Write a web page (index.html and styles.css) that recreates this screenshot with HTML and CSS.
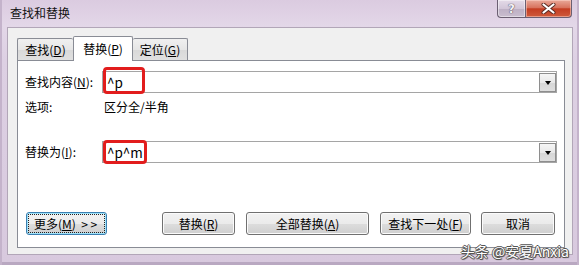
FILE: index.html
```html
<!DOCTYPE html>
<html lang="zh-CN">
<head>
<meta charset="utf-8">
<title>查找和替换</title>
<link rel="stylesheet" href="styles.css">
</head>
<body>
<div class="window">
  <div class="titlebar">
    <span class="title">查找和替换</span>
    <div class="caption-btns">
      <div class="cap help"><span>?</span></div>
      <div class="cap close">
        <svg width="15" height="11" viewBox="0 0 15 11">
          <path d="M2.5 1.5 L12.5 9.5 M12.5 1.5 L2.5 9.5" stroke="#5a2a22" stroke-width="4" stroke-linecap="round"/>
          <path d="M2.5 1.5 L12.5 9.5 M12.5 1.5 L2.5 9.5" stroke="#ffffff" stroke-width="2.2" stroke-linecap="round"/>
        </svg>
      </div>
    </div>
  </div>
  <div class="client">
    <div class="tabs">
      <div class="tab t1">查找(<u>D</u>)</div>
      <div class="tab t2 active">替换(<u>P</u>)</div>
      <div class="tab t3">定位(<u>G</u>)</div>
    </div>
    <div class="panel">
      <div class="row r1">
        <span class="lbl">查找内容(<u>N</u>):</span>
        <div class="combo">
          <span class="val">^p</span>
          <div class="drop"><i class="tri"></i></div>
          <div class="mark m1"></div>
        </div>
      </div>
      <div class="row r2">
        <span class="lbl">选项:</span>
        <span class="opt">区分全/半角</span>
      </div>
      <div class="row r3">
        <span class="lbl">替换为(<u>I</u>):</span>
        <div class="combo">
          <span class="val">^p^m</span>
          <div class="drop"><i class="tri"></i></div>
          <div class="mark m2"></div>
        </div>
      </div>
      <div class="buttons">
        <div class="btn default b1"><span class="focus">更多(<u>M</u>)&nbsp; &gt; &gt;</span></div>
        <div class="btn b2">替换(<u>R</u>)</div>
        <div class="btn b3">全部替换(<u>A</u>)</div>
        <div class="btn b4">查找下一处(<u>F</u>)</div>
        <div class="btn b5">取消</div>
      </div>
    </div>
  </div>
  <div class="watermark">头条 @安夏Anxia</div>
</div>
</body>
</html>
```
FILE: styles.css
```css
* { box-sizing: border-box; }
html, body { margin: 0; padding: 0; }
body {
  width: 579px;
  height: 265px;
  overflow: hidden;
  font-family: "Noto Sans CJK SC", "Noto Sans", sans-serif;
  font-size: 12px;
  color: #000;
  background: #d9cbdf;
}
u { text-decoration: underline; text-underline-offset: 1px; }

.window {
  position: relative;
  width: 579px;
  height: 265px;
  display: flex;
  flex-direction: column;
  padding: 0 6px 10px 7px;
  background: linear-gradient(to bottom, #dbcbe0 0px, #e3d7e8 26px, #ddd0e3 60px, #d8c9de 100%);
  box-shadow: inset 2px 0 0 #c4b3cb, inset -2px 0 0 #c4b3cb, inset 0 -3px 0 #b9a8c1;
}

.titlebar {
  height: 27px;
  display: flex;
  align-items: flex-start;
  justify-content: space-between;
}
.title {
  margin-left: 3px;
  margin-top: 5px;
  line-height: 16px;
  font-size: 12px;
  color: #111;
}
.caption-btns {
  display: flex;
  margin-right: 1px;
  height: 18px;
}
.cap {
  height: 18px;
  border: 1px solid #6b5f72;
  border-top: none;
  display: flex;
  align-items: center;
  justify-content: center;
}
.help {
  width: 28px;
  border-right: none;
  border-bottom-left-radius: 4px;
  background: linear-gradient(to bottom, #e4dbe8 0%, #d2c6d8 50%, #bdb0c4 51%, #c9bdcf 100%);
  box-shadow: inset 0 0 0 1px rgba(255,255,255,0.45);
}
.help span {
  font-family: "DejaVu Sans", sans-serif;
  font-size: 12px;
  font-weight: bold;
  line-height: 14px;
  color: #f4f2f6;
  text-shadow: 0 0 1px #4a4050, 0 0 1px #4a4050;
}
.close {
  width: 47px;
  border-bottom-right-radius: 4px;
  background: linear-gradient(to bottom, #e9a99a 0%, #d8735e 45%, #c43d22 52%, #cf5a3c 100%);
  box-shadow: inset 0 0 0 1px rgba(255,220,210,0.5);
}

.client {
  flex: 1;
  background: #f0f0f0;
  border: 1px solid #b2a6b8;
  padding: 8px 7px 6px 9px;
  display: flex;
  flex-direction: column;
}

.tabs {
  height: 24px;
  display: flex;
  align-items: flex-end;
  position: relative;
  z-index: 2;
}
.tab {
  height: 22px;
  border: 1px solid #898c95;
  border-bottom: none;
  border-radius: 2px 2px 0 0;
  background: linear-gradient(to bottom, #f0f0f0 0%, #e6e6e6 50%, #d9d9d9 51%, #e0e0e0 100%);
  display: flex;
  align-items: center;
  justify-content: center;
  line-height: 16px;
  padding-top: 1px;
}
.t1 { width: 56px; border-right: none; }
.t2 { width: 60px; }
.t3 { width: 55px; border-left: none; }
.tab.active {
  height: 25px;
  margin-bottom: -1px;
  background: #ffffff;
  padding-top: 0;
}

.panel {
  height: 188px;
  border: 1px solid #898c95;
  background: #ffffff;
  padding: 10px 7px 0 7px;
  display: flex;
  flex-direction: column;
}
.row {
  display: flex;
  align-items: center;
}
.lbl {
  width: 77px;
  flex: none;
  line-height: 16px;
}
.r1 { height: 22px; }
.r2 { margin-top: 6px; height: 16px; }
.r3 { margin-top: 26px; height: 22px; }
.opt { padding-left: 2px; line-height: 16px; }

.combo {
  position: relative;
  flex: 1;
  height: 22px;
  border: 1px solid #a5a5a5;
  background: #fff;
  display: flex;
  align-items: center;
}
.val {
  flex: 1;
  padding-left: 4px;
  line-height: 16px;
  font-size: 13.5px;
}
.drop {
  width: 17px;
  height: 19px;
  margin-top: 1px;
  align-self: flex-start;
  border: 1px solid #8e8e8e;
  background: linear-gradient(to bottom, #f5f5f5 0%, #e8e8e8 50%, #d6d6d6 51%, #dedede 100%);
  display: flex;
  align-items: center;
  justify-content: center;
}
.tri {
  width: 0;
  height: 0;
  border-left: 3px solid transparent;
  border-right: 3px solid transparent;
  border-top: 4px solid #000;
}

.mark {
  position: absolute;
  left: 0;
  border: 3px solid #e21d1d;
  border-radius: 4px;
}
.m1 { top: -5px; width: 42px; height: 27px; }
.m2 { top: -2px; width: 44px; height: 24px; }

.buttons {
  margin-top: 49px;
  padding-left: 1px;
  display: flex;
  gap: 11px;
}
.btn {
  height: 23px;
  border: 1px solid #707070;
  border-radius: 3px;
  background: linear-gradient(to bottom, #f2f2f2 0%, #ebebeb 50%, #dddddd 51%, #cfcfcf 100%);
  box-shadow: inset 0 0 0 1px #fbfbfb;
  display: flex;
  align-items: center;
  justify-content: center;
  line-height: 16px;
}
.b1 { width: 81px; margin-right: 44px; }
.b2 { width: 73px; }
.b3 { width: 123px; }
.b4 { width: 91px; }
.b5 { width: 74px; margin-left: -1px; }
.btn.default {
  border-color: #3c7fb1;
  box-shadow: inset 0 0 0 1px #9fe4fb;
  justify-content: flex-start;
  padding: 1px;
}
.focus {
  flex: 1;
  align-self: stretch;
  border: 1px dotted #222;
  padding-left: 5px;
  display: flex;
  align-items: center;
  white-space: pre;
}

.watermark {
  position: absolute;
  right: 10px;
  bottom: 6px;
  font-size: 14px;
  line-height: 16px;
  color: #ffffff;
  text-shadow: 1px 0 0 #555, -1px 0 0 #555, 0 1px 0 #555, 0 -1px 0 #555, 1px 1px 1px #444;
  white-space: nowrap;
}
```
